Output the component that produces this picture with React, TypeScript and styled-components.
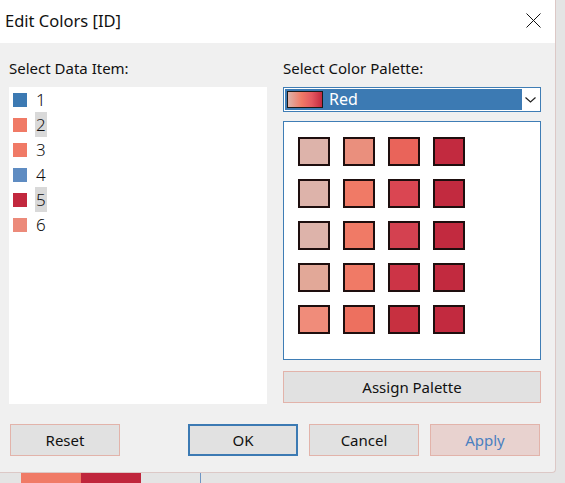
import React from "react";
import styled, { createGlobalStyle } from "styled-components";

const GlobalStyle = createGlobalStyle`
  html, body {
    margin: 0;
    padding: 0;
    background: #e4e4e4;
  }
  * {
    box-sizing: border-box;
  }
`;

const items = [
  { id: "1", color: "#3c7ab3", selected: false },
  { id: "2", color: "#f07a66", selected: true },
  { id: "3", color: "#f07a66", selected: false },
  { id: "4", color: "#5f8cc2", selected: false },
  { id: "5", color: "#c2283e", selected: true },
  { id: "6", color: "#ec8a7a", selected: false },
];

const palette = [
  ["#ddb3aa", "#ea8f7d", "#e9645a", "#c22a3f"],
  ["#ddb3aa", "#f07a66", "#da4652", "#c22a3f"],
  ["#ddb3aa", "#f07a66", "#d44150", "#c22a3f"],
  ["#e2a898", "#f07a66", "#cc3446", "#c22a3f"],
  ["#f08c7a", "#ed705f", "#c73040", "#c22a3f"],
];

const App = () => {
  return (
    <Screen>
      <GlobalStyle />
      <Dialog>
        <TitleBar>
          <Title>Edit Colors [ID]</Title>
          <CloseButton>
            <svg width="15" height="15" viewBox="0 0 15 15">
              <path d="M0.5 0.5 L14.5 14.5 M14.5 0.5 L0.5 14.5" stroke="#111" strokeWidth="1" fill="none" />
            </svg>
          </CloseButton>
        </TitleBar>
        <Body>
          <Column>
            <Label>Select Data Item:</Label>
            <ItemList>
              {items.map((item) => (
                <ItemRow key={item.id}>
                  <ItemSwatch $color={item.color} />
                  <ItemText $selected={item.selected}>{item.id}</ItemText>
                </ItemRow>
              ))}
            </ItemList>
          </Column>
          <Column>
            <Label>Select Color Palette:</Label>
            <Dropdown>
              <DropdownValue>
                <GradientSwatch />
                <DropdownText>Red</DropdownText>
              </DropdownValue>
              <Chevron>
                <svg width="11" height="6" viewBox="0 0 11 6">
                  <path d="M0.5 0.5 L5.5 5 L10.5 0.5" stroke="#222" strokeWidth="1.2" fill="none" />
                </svg>
              </Chevron>
            </Dropdown>
            <PaletteBox>
              <PaletteGrid>
                {palette.flat().map((c, i) => (
                  <PaletteSwatch key={i} $color={c} />
                ))}
              </PaletteGrid>
            </PaletteBox>
            <Button $wide>Assign Palette</Button>
          </Column>
        </Body>
        <Footer>
          <Button>Reset</Button>
          <FooterGroup>
            <Button $primary>OK</Button>
            <Button>Cancel</Button>
            <Button $disabled>Apply</Button>
          </FooterGroup>
        </Footer>
      </Dialog>
      <BehindRow>
        <BehindCell $color="#f07a66" />
        <BehindCell $color="#c0263c" />
        <BehindLine />
      </BehindRow>
    </Screen>
  );
};

export default App;

const Screen = styled.div`
  width: 565px;
  height: 483px;
  overflow: hidden;
  background: #e4e4e4;
  font-family: "Noto Sans", "Open Sans", sans-serif;
  color: #111;
`;

const Dialog = styled.div`
  width: 556px;
  height: 473px;
  background: #f0f0f0;
  border-right: 1px solid #dcc8c6;
  border-bottom: 1px solid #dcc8c6;
  border-bottom-right-radius: 4px;
  display: flex;
  flex-direction: column;
`;

const TitleBar = styled.div`
  height: 43px;
  background: #ffffff;
  display: flex;
  align-items: center;
  justify-content: space-between;
  padding-left: 5px;
  padding-right: 14px;
`;

const Title = styled.div`
  font-size: 16.5px;
  color: #111;
  padding-bottom: 2px;
`;

const CloseButton = styled.div`
  display: flex;
  align-items: center;
  padding-bottom: 2px;
`;

const Body = styled.div`
  display: grid;
  grid-template-columns: 258px 258px;
  column-gap: 16px;
  padding: 15px 0 0 9px;
`;

const Column = styled.div`
  display: flex;
  flex-direction: column;
`;

const Label = styled.div`
  height: 20px;
  line-height: 20px;
  font-size: 15px;
  margin-bottom: 9px;
`;

const ItemList = styled.div`
  height: 317px;
  background: #ffffff;
  padding-left: 4px;
  display: flex;
  flex-direction: column;
`;

const ItemRow = styled.div`
  height: 25px;
  display: flex;
  align-items: center;
  gap: 8px;
`;

const ItemSwatch = styled.div<{ $color: string }>`
  width: 14px;
  height: 14px;
  background: ${(p) => p.$color};
`;

const ItemText = styled.div<{ $selected: boolean }>`
  height: 25px;
  line-height: 25px;
  padding: 0 1px;
  font-size: 17px;
  font-weight: 300;
  background: ${(p) => (p.$selected ? "#d9d9d9" : "transparent")};
`;

const Dropdown = styled.div`
  height: 25px;
  border: 1px solid #3f7db5;
  background: #ffffff;
  padding: 1px;
  display: flex;
`;

const DropdownValue = styled.div`
  flex: 1;
  background: #3c7ab3;
  display: flex;
  align-items: center;
  padding-left: 2px;
  gap: 6px;
`;

const GradientSwatch = styled.div`
  width: 36px;
  height: 17px;
  border: 1px solid #1a1a1a;
  background: linear-gradient(90deg, #ddb3aa 0%, #f07a66 40%, #e35860 70%, #c22a3f 100%);
`;

const DropdownText = styled.span`
  color: #ffffff;
  font-size: 16px;
  line-height: 21px;
`;

const Chevron = styled.div`
  width: 17px;
  display: flex;
  align-items: center;
  justify-content: center;
`;

const PaletteBox = styled.div`
  margin-top: 9px;
  height: 239px;
  background: #ffffff;
  border: 1px solid #3f7db5;
  padding: 15px 0 0 14px;
`;

const PaletteGrid = styled.div`
  display: grid;
  grid-template-columns: repeat(4, 32px);
  grid-auto-rows: 29px;
  column-gap: 13px;
  row-gap: 13px;
`;

const PaletteSwatch = styled.div<{ $color: string }>`
  border: 2px solid #1e0e0e;
  background: ${(p) => p.$color};
`;

const Button = styled.div<{ $wide?: boolean; $primary?: boolean; $disabled?: boolean }>`
  width: ${(p) => (p.$wide ? "258px" : "110px")};
  height: 32px;
  margin-top: ${(p) => (p.$wide ? "11px" : "0")};
  display: flex;
  align-items: center;
  justify-content: center;
  font-size: 15px;
  background: ${(p) => (p.$disabled ? "#e8d2cf" : "#e1e1e1")};
  border: ${(p) => (p.$primary ? "2px solid #3c7ab3" : "1px solid #e2b3aa")};
  color: ${(p) => (p.$disabled ? "#4a80c0" : "#111")};
`;

const Footer = styled.div`
  display: flex;
  justify-content: space-between;
  padding: 20px 15px 0 10px;
`;

const FooterGroup = styled.div`
  display: flex;
  gap: 11px;
`;

const BehindRow = styled.div`
  height: 10px;
  display: flex;
  padding-left: 21px;
`;

const BehindCell = styled.div<{ $color: string }>`
  width: 60px;
  background: ${(p) => p.$color};
`;

const BehindLine = styled.div`
  width: 1px;
  margin-left: 59px;
  background: #6f95c4;
`;
